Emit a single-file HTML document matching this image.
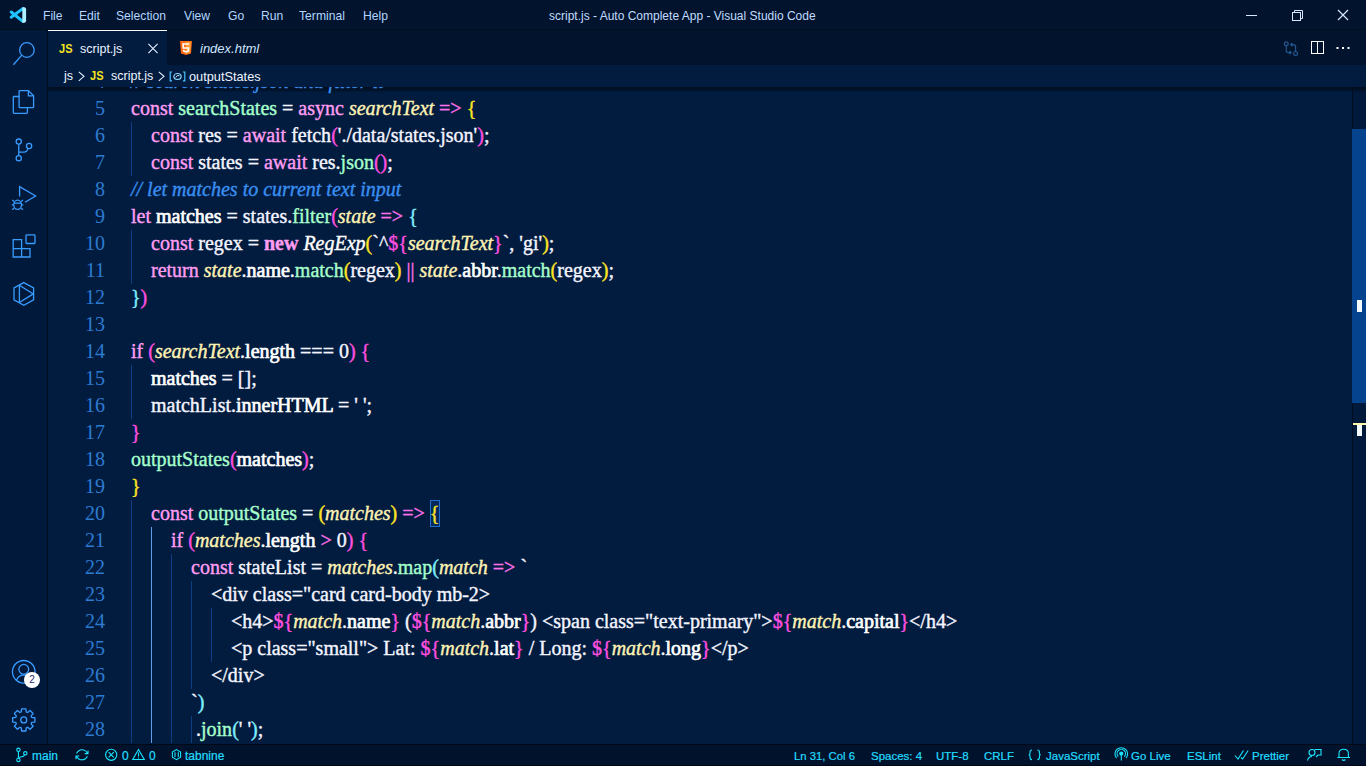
<!DOCTYPE html>
<html><head><meta charset="utf-8">
<style>
*{margin:0;padding:0;box-sizing:border-box}
html,body{width:1366px;height:768px;overflow:hidden;background:#fff}
body{position:relative;font-family:"Liberation Sans",sans-serif}
.abs{position:absolute}
#title{left:0;top:0;width:1366px;height:29px;background:#01132d}
#tline{left:0;top:29px;width:1366px;height:1px;background:#030f1d}
#act{left:0;top:30px;width:47px;height:714px;background:#011a3b}
#aline{left:47px;top:30px;width:1px;height:714px;background:#000d1c}
#tabs{left:48px;top:30px;width:1318px;height:35px;background:#01132d}
#crumb{left:48px;top:65px;width:1318px;height:22px;background:#011c3f}
#editor{left:48px;top:87px;width:1304px;height:657px;background:#011c3f;overflow:hidden}
#sline{left:0;top:744px;width:1366px;height:1px;background:#000a16}
#status{left:0;top:745px;width:1366px;height:20px;background:#01122c}
#sbot{left:0;top:765px;width:1366px;height:1px;background:#00061a}
.menu{position:absolute;top:1px;height:29px;line-height:30px;font-size:13.5px;color:#b2d6ff;transform:scaleX(0.9);transform-origin:0 0}
.code{font-family:"Liberation Serif",serif;font-size:20px;white-space:pre;color:#f6f0ff;-webkit-text-stroke:0.4px currentColor}
.ln{position:absolute;left:0;width:57px;text-align:right;color:#2d7bd0;font-family:"Liberation Serif",serif;font-size:20px;line-height:27px}
.cl{position:absolute;left:83px;line-height:27px;height:27px}
.k{color:#ff9cf2}
.o{color:#ff70ea}
.kb{color:#ff9cf2;font-weight:bold}
.f{color:#a6ffcc}
.p{color:#fff3b4;font-style:italic}
.w{color:#f4f4ff}
.wb{color:#ffffff;-webkit-text-stroke:0.7px #ffffff}
.wi{color:#ffffff;font-style:italic}
.c{color:#3a8ef0;font-style:italic}
.b1{color:#ffe524}
.b2{color:#ff4fe0}
.b3{color:#7eeeff}
.guide{position:absolute;width:1px;background:#0d3d85}
.guideA{position:absolute;width:1px;background:#5d9de8}
.st{position:absolute;top:746px;height:20px;line-height:21px;font-size:12px;color:#22ddff;white-space:nowrap;-webkit-text-stroke:0.2px currentColor}

</style></head><body>
<div id="title" class="abs"></div>
<div id="tline" class="abs"></div>
<svg class="abs" style="left:0;top:0" width="40" height="29" viewBox="0 0 40 29">
  <path d="M22.8 8.6 L11.2 17.2 M22.8 21.4 L11.2 12" stroke="#1ec3ff" stroke-width="3" stroke-linecap="round" fill="none"/>
  <path d="M22.3 7.3 L24.6 7.3 Q26.1 7.8 26.1 9.2 V20.8 Q26.1 22.2 24.6 22.7 L22.3 22.7 Z" fill="#aef0ff"/>
</svg>
<div class="menu" style="left:43px">File</div>
<div class="menu" style="left:79px">Edit</div>
<div class="menu" style="left:116px">Selection</div>
<div class="menu" style="left:184px">View</div>
<div class="menu" style="left:228px">Go</div>
<div class="menu" style="left:261px">Run</div>
<div class="menu" style="left:299px">Terminal</div>
<div class="menu" style="left:363px">Help</div>
<div class="abs" style="left:549px;top:1px;height:29px;line-height:30px;font-size:12px;color:#c2dcff;white-space:nowrap">script.js - Auto Complete App - Visual Studio Code</div>
<svg class="abs" style="left:1230px;top:0" width="136" height="29" viewBox="1230 0 136 29" fill="none" stroke="#d4e9ff" stroke-width="1">
  <path d="M1246 15.5 H1257"/>
  <rect x="1292.5" y="12.5" width="8" height="8"/>
  <path d="M1294.5 12.5 V10.5 H1302.5 V18.5 H1300.5"/>
  <path d="M1338 10 L1348 20 M1348 10 L1338 20" stroke-width="1.2"/>
</svg>

<div id="act" class="abs"></div>
<div id="aline" class="abs"></div>
<svg class="abs" style="left:0;top:30px" width="47" height="714" viewBox="0 30 47 714" fill="none" stroke="#3a9bff" stroke-width="1.3">
  <!-- search -->
  <circle cx="26.9" cy="50" r="7.3"/>
  <path d="M21.6 55.4 L13.4 64.8"/>
  <!-- explorer -->
  <path d="M19.2 96.5 H14 Q13.3 96.5 13.3 97.3 V112.6 Q13.3 113.4 14 113.4 H26.6 Q27.4 113.4 27.4 112.6 V107.8"/>
  <path d="M19.8 90.6 H28.4 L33.6 95.8 V107 Q33.6 107.7 32.9 107.7 H19.8 Q19.1 107.7 19.1 107 V91.3 Q19.1 90.6 19.8 90.6 Z"/>
  <path d="M28.4 90.6 V95.8 H33.6"/>
  <!-- source control -->
  <circle cx="18.75" cy="141.6" r="2.6"/>
  <circle cx="29.1" cy="146" r="2.6"/>
  <circle cx="18.75" cy="158.3" r="2.6"/>
  <path d="M18.75 144.2 V155.7"/>
  <path d="M28 148.4 Q27 152.2 24 152.2 H18.75"/>
  <!-- run and debug -->
  <path d="M19.6 196.5 V186.6 L35.6 196 L25 202.2"/>
  <ellipse cx="17.6" cy="204.8" rx="3.9" ry="4.6"/>
  <path d="M14 201.5 L12.3 199.9 M21.2 201.5 L22.9 199.9 M13.5 204.8 H11.8 M21.7 204.8 H23.4 M14 208.2 L12.3 209.8 M21.2 208.2 L22.9 209.8 M13.9 203.2 H21.3"/>
  <!-- extensions -->
  <path d="M13.2 239.6 H21.6 V248.6 H30 V257 H13.2 Z M13.2 248.6 H21.6 V257"/>
  <rect x="26" y="234.9" width="9" height="8.6" rx="0.8"/>
  <!-- remote/hex -->
  <path d="M23.8 282.6 L33.6 288 V299.8 L23.8 305.3 L14 299.8 V288 Z"/>
  <path d="M19.4 285.2 V302.5 M19.4 285.2 L33.3 293.9 L19.4 302.5"/>
  <!-- accounts -->
  <circle cx="23.75" cy="671.8" r="11.3"/>
  <circle cx="23.75" cy="669.3" r="4.9"/>
  <path d="M16.5 680.2 Q18.5 675.2 23.75 675.2 Q29 675.2 31 680.2"/>
  <!-- gear -->
  <circle cx="23.75" cy="719.9" r="3"/>
  <path d="M21.29 711.87 L21.59 708.81 L25.91 708.81 L26.21 711.87 L27.69 712.48 L30.07 710.53 L33.12 713.58 L31.17 715.96 L31.78 717.44 L34.84 717.74 L34.84 722.06 L31.78 722.36 L31.17 723.84 L33.12 726.22 L30.07 729.27 L27.69 727.32 L26.21 727.93 L25.91 730.99 L21.59 730.99 L21.29 727.93 L19.81 727.32 L17.43 729.27 L14.38 726.22 L16.33 723.84 L15.72 722.36 L12.66 722.06 L12.66 717.74 L15.72 717.44 L16.33 715.96 L14.38 713.58 L17.43 710.53 L19.81 712.48 Z" stroke-linejoin="round"/>
</svg>
<div class="abs" style="left:24px;top:672px;width:16px;height:16px;border-radius:8px;background:#fff;color:#1b2a6b;font-size:10px;line-height:16px;text-align:center">2</div>

<div id="tabs" class="abs"></div>
<div class="abs" style="left:48px;top:30px;width:119px;height:35px;background:#011c3f"></div>
<div class="abs" style="left:48px;top:30px;width:119px;height:1px;background:#ffffff"></div>
<div class="abs" style="left:59px;top:39px;font-size:12px;font-weight:bold;color:#f2e421;line-height:20px;transform:scaleX(0.92);transform-origin:0 0">JS</div>
<div class="abs" style="left:80px;top:39px;font-size:12.5px;color:#eef4ff;line-height:20px">script.js</div>
<svg class="abs" style="left:146px;top:41px" width="14" height="14" viewBox="0 0 14 14" stroke="#e8f0ff" stroke-width="1.1"><path d="M2.4 2.9 L11.6 12.1 M11.6 2.9 L2.4 12.1"/></svg>
<svg class="abs" style="left:179px;top:40px" width="14" height="16" viewBox="0 0 14 16">
  <path d="M1 1 H13 L12 13.5 L7 15 L2 13.5 Z" fill="#ff6a16"/>
  <path d="M7 2 H12 L11.2 12.8 L7 14 Z" fill="#ff9a30"/>
  <path d="M10.2 4 H4 L4.3 8 H9.6 L9.3 11 L7 11.8 L4.8 11 L4.7 9.8" fill="none" stroke="#fff" stroke-width="1.6"/>
</svg>
<div class="abs" style="left:200px;top:39px;font-size:13px;font-style:italic;color:#cfe4ff;line-height:20px">index.html</div>
<svg class="abs" style="left:1280px;top:38px" width="80" height="22" viewBox="1280 38 80 22" fill="none">
  <g stroke="#24578f" stroke-width="1.2">
    <circle cx="1286.3" cy="43.8" r="1.9"/>
    <circle cx="1295.6" cy="53.4" r="1.9"/>
    <path d="M1286.3 45.7 V50.5 Q1286.3 52.6 1288.4 52.6 H1291.2 M1289.5 51 L1291.2 52.6 L1289.5 54.2"/>
    <path d="M1295.6 51.5 V46.7 Q1295.6 44.6 1293.5 44.6 H1290.7 M1292.4 43 L1290.7 44.6 L1292.4 46.2"/>
  </g>
  <rect x="1311.5" y="41.5" width="12" height="12" stroke="#ffffff" stroke-width="1"/>
  <path d="M1317.5 41.5 V53.5" stroke="#ffffff" stroke-width="1"/>
  <rect x="1336.5" y="47" width="2" height="2" fill="#fff"/>
  <rect x="1342" y="47" width="2" height="2" fill="#fff"/>
  <rect x="1347.5" y="47" width="2" height="2" fill="#fff"/>
</svg>

<div id="crumb" class="abs"></div>

<div id="editor" class="abs">
<div class="abs" style="left:382px;top:413px;width:10px;height:27px;border:1px solid #1f6ed0;background:#06295c"></div>
<div class="abs" style="left:0;top:0;width:1304px;height:5px;background:linear-gradient(rgba(2,8,18,0.7),rgba(2,8,18,0.45) 70%,rgba(2,8,18,0))"></div>
<div class="guide" style="left:83px;top:34.5px;height:54px"></div>
<div class="guide" style="left:83px;top:142.5px;height:54px"></div>
<div class="guide" style="left:83px;top:277.5px;height:54px"></div>
<div class="guide" style="left:83px;top:412.5px;height:243px"></div>
<div class="guideA" style="left:103px;top:439.5px;height:216px"></div>
<div class="guide" style="left:123px;top:466.5px;height:189px"></div>
<div class="guide" style="left:143px;top:493.5px;height:108px"></div>
<div class="guide" style="left:143px;top:628.5px;height:27px"></div>
<div class="guide" style="left:163px;top:520.5px;height:54px"></div>
<div class="ln" style="top:-19.5px">4</div>
<div class="cl code" style="top:-19.5px;left:83px"><span class="c">// search states.json and filter it</span></div>
<div class="ln" style="top:7.5px">5</div>
<div class="cl code" style="top:7.5px;left:83px"><span class="k">const</span><span class="w"> </span><span class="f">searchStates</span><span class="w"> = </span><span class="k">async</span><span class="w"> </span><span class="p">searchText</span><span class="w"> </span><span class="o">=></span><span class="w"> </span><span class="b1">{</span></div>
<div class="ln" style="top:34.5px">6</div>
<div class="cl code" style="top:34.5px;left:103px"><span class="k">const</span><span class="w"> res = </span><span class="k">await</span><span class="w"> fetch</span><span class="b2">(</span><span class="w">'./data/states.json'</span><span class="b2">)</span><span class="w">;</span></div>
<div class="ln" style="top:61.5px">7</div>
<div class="cl code" style="top:61.5px;left:103px"><span class="k">const</span><span class="w"> states = </span><span class="k">await</span><span class="w"> res.</span><span class="f">json</span><span class="b2">()</span><span class="w">;</span></div>
<div class="ln" style="top:88.5px">8</div>
<div class="cl code" style="top:88.5px;left:83px"><span class="c">// let matches to current text input</span></div>
<div class="ln" style="top:115.5px">9</div>
<div class="cl code" style="top:115.5px;left:83px"><span class="k">let</span><span class="w"> </span><span class="wb">matches</span><span class="w"> = states.</span><span class="f">filter</span><span class="b2">(</span><span class="p">state</span><span class="w"> </span><span class="o">=></span><span class="w"> </span><span class="b3">{</span></div>
<div class="ln" style="top:142.5px">10</div>
<div class="cl code" style="top:142.5px;left:103px"><span class="k">const</span><span class="w"> regex = </span><span class="kb">new</span><span class="w"> </span><span class="wi">RegExp</span><span class="b1">(</span><span class="w">`^</span><span class="b2">${</span><span class="p">searchText</span><span class="b2">}</span><span class="w">`, 'gi'</span><span class="b1">)</span><span class="w">;</span></div>
<div class="ln" style="top:169.5px">11</div>
<div class="cl code" style="top:169.5px;left:103px"><span class="k">return</span><span class="w"> </span><span class="p">state</span><span class="w">.</span><span class="wb">name</span><span class="w">.</span><span class="f">match</span><span class="b1">(</span><span class="w">regex</span><span class="b1">)</span><span class="w"> </span><span class="o">||</span><span class="w"> </span><span class="p">state</span><span class="w">.</span><span class="wb">abbr</span><span class="w">.</span><span class="f">match</span><span class="b1">(</span><span class="w">regex</span><span class="b1">)</span><span class="w">;</span></div>
<div class="ln" style="top:196.5px">12</div>
<div class="cl code" style="top:196.5px;left:83px"><span class="b3">}</span><span class="b2">)</span></div>
<div class="ln" style="top:223.5px">13</div>
<div class="cl code" style="top:223.5px;left:83px"></div>
<div class="ln" style="top:250.5px">14</div>
<div class="cl code" style="top:250.5px;left:83px"><span class="k">if</span><span class="w"> </span><span class="b2">(</span><span class="p">searchText</span><span class="w">.</span><span class="wb">length</span><span class="w"> === 0</span><span class="b2">)</span><span class="w"> </span><span class="b2">{</span></div>
<div class="ln" style="top:277.5px">15</div>
<div class="cl code" style="top:277.5px;left:103px"><span class="wb">matches</span><span class="w"> = [];</span></div>
<div class="ln" style="top:304.5px">16</div>
<div class="cl code" style="top:304.5px;left:103px"><span class="w">matchList.</span><span class="wb">innerHTML</span><span class="w"> = ' ';</span></div>
<div class="ln" style="top:331.5px">17</div>
<div class="cl code" style="top:331.5px;left:83px"><span class="b2">}</span></div>
<div class="ln" style="top:358.5px">18</div>
<div class="cl code" style="top:358.5px;left:83px"><span class="f">outputStates</span><span class="b2">(</span><span class="wb">matches</span><span class="b2">)</span><span class="w">;</span></div>
<div class="ln" style="top:385.5px">19</div>
<div class="cl code" style="top:385.5px;left:83px"><span class="b1">}</span></div>
<div class="ln" style="top:412.5px">20</div>
<div class="cl code" style="top:412.5px;left:103px"><span class="k">const</span><span class="w"> </span><span class="f">outputStates</span><span class="w"> = </span><span class="b1">(</span><span class="p">matches</span><span class="b1">)</span><span class="w"> </span><span class="o">=></span><span class="w"> </span><span class="b1">{</span></div>
<div class="ln" style="top:439.5px">21</div>
<div class="cl code" style="top:439.5px;left:123px"><span class="k">if</span><span class="w"> </span><span class="b2">(</span><span class="p">matches</span><span class="w">.</span><span class="wb">length</span><span class="w"> </span><span class="o">&gt;</span><span class="w"> 0</span><span class="b2">)</span><span class="w"> </span><span class="b2">{</span></div>
<div class="ln" style="top:466.5px">22</div>
<div class="cl code" style="top:466.5px;left:143px"><span class="k">const</span><span class="w"> stateList = </span><span class="p">matches</span><span class="w">.</span><span class="f">map</span><span class="b3">(</span><span class="p">match</span><span class="w"> </span><span class="o">=></span><span class="w"> `</span></div>
<div class="ln" style="top:493.5px">23</div>
<div class="cl code" style="top:493.5px;left:163px"><span class="w">&lt;div class="card card-body mb-2&gt;</span></div>
<div class="ln" style="top:520.5px">24</div>
<div class="cl code" style="top:520.5px;left:183px"><span class="w">&lt;h4&gt;</span><span class="b2">${</span><span class="p">match</span><span class="w">.</span><span class="wb">name</span><span class="b2">}</span><span class="w"> (</span><span class="b2">${</span><span class="p">match</span><span class="w">.</span><span class="wb">abbr</span><span class="b2">}</span><span class="w">) &lt;span class="text-primary"&gt;</span><span class="b2">${</span><span class="p">match</span><span class="w">.</span><span class="wb">capital</span><span class="b2">}</span><span class="w">&lt;/h4&gt;</span></div>
<div class="ln" style="top:547.5px">25</div>
<div class="cl code" style="top:547.5px;left:183px"><span class="w">&lt;p class="small"&gt; Lat: </span><span class="b2">${</span><span class="p">match</span><span class="w">.</span><span class="wb">lat</span><span class="b2">}</span><span class="w"> / Long: </span><span class="b2">${</span><span class="p">match</span><span class="w">.</span><span class="wb">long</span><span class="b2">}</span><span class="w">&lt;/p&gt;</span></div>
<div class="ln" style="top:574.5px">26</div>
<div class="cl code" style="top:574.5px;left:163px"><span class="w">&lt;/div&gt;</span></div>
<div class="ln" style="top:601.5px">27</div>
<div class="cl code" style="top:601.5px;left:143px"><span class="w">`</span><span class="b3">)</span></div>
<div class="ln" style="top:628.5px">28</div>
<div class="cl code" style="top:628.5px;left:143px"><span class="w"> .</span><span class="f">join</span><span class="b3">(</span><span class="w">' '</span><span class="b3">)</span><span class="w">;</span></div>
</div>

<div class="abs" style="left:1352px;top:87px;width:1px;height:657px;background:#010d1e"></div>
<div class="abs" style="left:1353px;top:87px;width:13px;height:657px;background:#011a3b"></div>
<div class="abs" style="left:1352px;top:129px;width:14px;height:274px;background:#06438f"></div>
<div class="abs" style="left:1357px;top:300px;width:5px;height:12px;background:#f4fbff"></div>
<div class="abs" style="left:1353px;top:423px;width:13px;height:2px;background:#fff6a8"></div>
<div class="abs" style="left:1357px;top:425px;width:5px;height:11px;background:#f4fbff"></div>

<div class="abs" style="left:1352px;top:87px;width:14px;height:5px;background:linear-gradient(rgba(2,8,18,0.7),rgba(2,8,18,0.45) 70%,rgba(2,8,18,0))"></div>
<div class="abs" style="left:64px;top:66px;font-size:12.5px;color:#eef4ff;line-height:21px">js</div>
<svg class="abs" style="left:76px;top:70px" width="12" height="12" viewBox="0 0 12 12" fill="none" stroke="#e6f0ff" stroke-width="1.1"><path d="M2.8 1.8 L8 6.3 L2.8 10.8"/></svg>
<div class="abs" style="left:90px;top:66px;font-size:12px;font-weight:bold;color:#f2e421;line-height:20px;transform:scaleX(0.92);transform-origin:0 0">JS</div>
<div class="abs" style="left:111px;top:66px;font-size:12.5px;color:#eef4ff;line-height:21px">script.js</div>
<svg class="abs" style="left:156px;top:70px" width="12" height="12" viewBox="0 0 12 12" fill="none" stroke="#e6f0ff" stroke-width="1.1"><path d="M2.8 1.8 L8 6.3 L2.8 10.8"/></svg>
<svg class="abs" style="left:169px;top:71px" width="17" height="11" viewBox="0 0 17 11" fill="none" stroke="#4cc3ff" stroke-width="1.2">
  <path d="M3 1 H1.2 V9.8 H3 M14 1 H15.8 V9.8 H14"/>
  <ellipse cx="8.5" cy="5.4" rx="3.6" ry="2.9" stroke="#8fdcff"/>
  <path d="M6.6 6.2 Q8 4 10.4 4.6" stroke="#d8f2ff" stroke-width="1"/>
</svg>
<div class="abs" style="left:189px;top:66px;font-size:12.75px;color:#eef4ff;line-height:21px">outputStates</div>

<div id="sline" class="abs"></div>
<div id="status" class="abs"></div>
<div id="sbot" class="abs"></div>
<svg class="abs" style="left:0;top:745px" width="1366" height="20" viewBox="0 745 1366 20" fill="none" stroke="#1ae6ff" stroke-width="1.1">
  <circle cx="18.4" cy="749.8" r="1.7"/>
  <circle cx="25.3" cy="753.3" r="1.7"/>
  <circle cx="18.4" cy="760" r="1.7"/>
  <path d="M18.4 751.5 V758.3 M24.6 754.9 Q23.8 756.6 21.8 756.8 L18.4 757.5"/>
  <path d="M76.5 753.6 Q78.5 749.8 82 749.8 Q85.6 749.8 87.4 753.4 M87.4 756.2 Q85.5 759.8 82 759.8 Q78.4 759.8 76.6 756.4 M84.6 753.6 H88 V750.4 M79.4 756 H76 V759.2"/>
  <circle cx="111.2" cy="754.8" r="5.6"/>
  <path d="M108.6 752.2 L113.8 757.4 M113.8 752.2 L108.6 757.4"/>
  <path d="M138.5 749.5 L144.3 759.5 H132.7 Z M138.5 752.5 V756.5 M138.5 757.5 V758.5"/>
  <path d="M176.5 749.6 L180.6 752 V757.2 L176.5 759.6 L172.4 757.2 V752 Z M175 752.2 V757 M178.3 752.2 V757"/>
  <path d="M1032 750 Q1030 750 1030 752 V753.6 Q1030 754.6 1028.8 754.8 Q1030 755 1030 756 V757.6 Q1030 759.6 1032 759.6 M1037.4 750 Q1039.4 750 1039.4 752 V753.6 Q1039.4 754.6 1040.6 754.8 Q1039.4 755 1039.4 756 V757.6 Q1039.4 759.6 1037.4 759.6"/>
  <circle cx="1121.3" cy="753.6" r="1.6" fill="#1ae6ff"/>
  <path d="M1121.3 755.2 V760.5 M1118.3 756.6 A4.2 4.2 0 1 1 1124.3 756.6 M1116.6 758.2 A6.3 6.3 0 1 1 1126 758.2"/>
  <path d="M1235 755.5 L1238 759 L1243.5 750.5 M1241 757.5 L1242.6 759 L1248.2 750.5"/>
  <circle cx="1312" cy="752.5" r="3"/>
  <path d="M1307.5 760.5 Q1308.5 756.5 1312 756.5 M1314.5 749.5 H1321 V755 H1318 L1316 757"/>
  <path d="M1339 757.5 V753.5 Q1339 749.3 1343.7 749.3 Q1348.4 749.3 1348.4 753.5 V757.5 H1350 H1337.4 Z M1342 759.5 Q1343.7 761.2 1345.4 759.5"/>
</svg>
<div class="st" style="left:32px">main</div>
<div class="st" style="left:122px">0</div>
<div class="st" style="left:149px">0</div>
<div class="st" style="left:185px">tabnine</div>
<div class="st" style="left:794px;font-size:11.3px">Ln 31, Col 6</div>
<div class="st" style="left:871px;font-size:11.5px">Spaces: 4</div>
<div class="st" style="left:936px;font-size:11.5px">UTF-8</div>
<div class="st" style="left:984px;font-size:11.5px">CRLF</div>
<div class="st" style="left:1046px;font-size:11.5px">JavaScript</div>
<div class="st" style="left:1131px;font-size:11.5px">Go Live</div>
<div class="st" style="left:1187px;font-size:11.5px">ESLint</div>
<div class="st" style="left:1252px;font-size:11.5px">Prettier</div>

</body></html>
